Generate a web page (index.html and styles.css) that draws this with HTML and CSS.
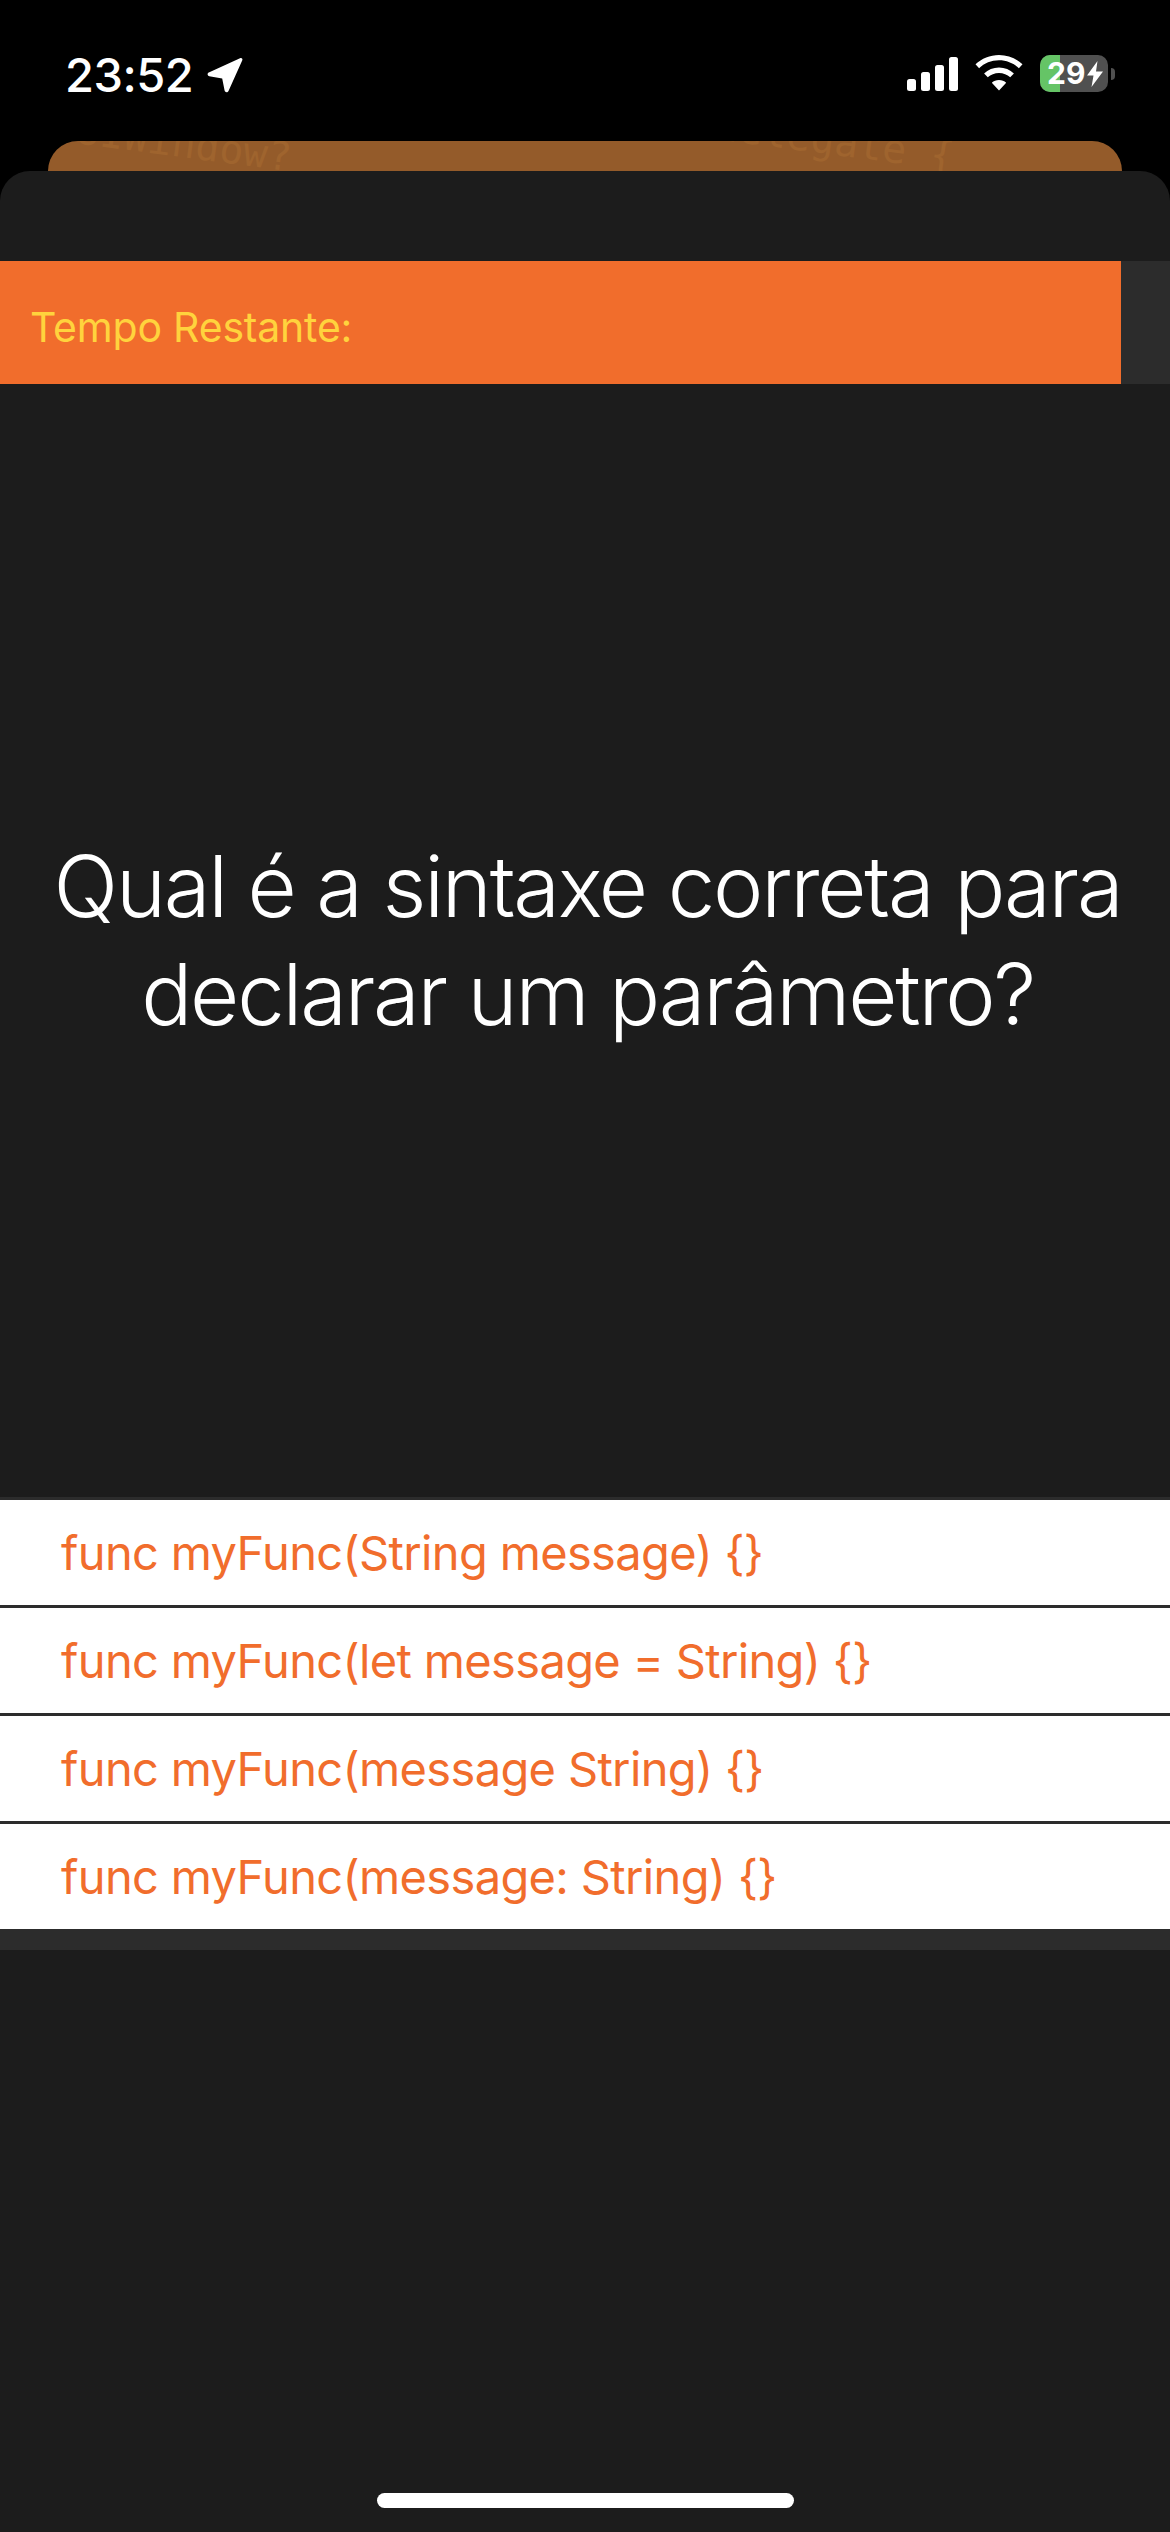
FILE: index.html
```html
<!DOCTYPE html>
<html lang="pt">
<head>
<meta charset="utf-8">
<title>Quiz</title>
<link rel="stylesheet" href="styles.css">
</head>
<body>
<div class="screen">
  <header class="status">
    <div class="status-left">
      <span class="time">23:52</span>
      <svg class="loc" viewBox="0 0 36 36" width="36" height="36"><path d="M33 1.200c1.500-.9 3 .5 2.300 2L21.500 34c-.9 1.800-3.400 1.500-3.900-.4L15.200 21.500 2.300 19.200c-2-.4-2.300-2.900-.5-3.700z" fill="#fff"/></svg>
    </div>
    <div class="status-right">
      <svg class="signal" viewBox="0 0 51 34" width="51" height="34"><rect x="0" y="22" width="9" height="12" rx="2.500"/><rect x="14" y="15" width="9" height="19" rx="2.500"/><rect x="28" y="8" width="9" height="26" rx="2.500"/><rect x="42" y="0" width="9" height="34" rx="2.500"/></svg>
      <svg class="wifi" viewBox="0 0 48 36" width="48" height="36"><path d="M24 0c9 0 17.300 3.500 23.500 9.300l-3.600 3.900C38.700 8.300 31.700 5.300 24 5.300S9.300 8.300 4.100 13.200L.5 9.300C6.700 3.500 15 0 24 0zM24 12.500c5.700 0 11 2.200 14.900 5.900l-3.700 3.900C32.300 19.600 28.300 18 24 18s-8.300 1.600-11.200 4.300l-3.700-3.900C13 14.700 18.300 12.500 24 12.500zM24 25c2.800 0 5.300 1 7.200 2.800L24 35.500l-7.200-7.700C18.700 26 21.200 25 24 25z"/></svg>
      <div class="battery">
        <div class="battery-body">
          <div class="battery-fill"></div>
          <span class="battery-text">29</span>
          <svg class="bolt" viewBox="0 0 16 26" width="16" height="26"><path d="M10.500 0 0 14.500h6.500L4.500 26 16 10.500H9z" fill="#fff"/></svg>
        </div>
        <div class="battery-cap"></div>
      </div>
    </div>
  </header>

  <div class="peek">
    <div class="peek-card">
      <span class="peek-code peek-a">UIWindow?</span>
      <span class="peek-code peek-b">delegate {</span>
    </div>
  </div>

  <main class="sheet">
    <div class="timer">
      <div class="timer-fill"><span class="timer-label">Tempo Restante:</span></div>
    </div>
    <div class="question">
      <h1 class="question-text">Qual é a sintaxe correta para declarar um parâmetro?</h1>
    </div>
    <ul class="answers">
      <li class="answer">func myFunc(String message) {}</li>
      <li class="answer">func myFunc(let message = String) {}</li>
      <li class="answer">func myFunc(message String) {}</li>
      <li class="answer">func myFunc(message: String) {}</li>
    </ul>
    <div class="home-area"><div class="home-bar"></div></div>
  </main>
</div>
</body>
</html>
```
FILE: styles.css
```css
* { box-sizing: border-box; }
html, body { margin: 0; padding: 0; background: #000; }
body { font-family: Inter, "Liberation Sans", sans-serif; }
.screen { width: 1170px; height: 2532px; display: flex; flex-direction: column; overflow: hidden; background: #000; }

.status { height: 141px; flex: none; display: flex; justify-content: space-between; padding: 55px 55px 0 65px; }
.status-left { display: flex; align-items: flex-start; gap: 14px; }
.time { color: #fff; font-size: 47px; font-weight: 500; letter-spacing: -0.5px; line-height: 40px; }
.loc { margin-top: 2px; }
.status-right { display: flex; align-items: flex-start; }
.signal { fill: #fff; margin-top: 2px; }
.wifi { fill: #fff; margin-left: 17px; }
.battery { display: flex; align-items: center; margin-left: 17px; height: 37px; }
.battery-body { position: relative; width: 68px; height: 37px; border-radius: 10px; background: #505050; overflow: hidden; display: flex; align-items: center; padding-left: 7px; gap: 2px; }
.battery-fill { position: absolute; left: 0; top: 0; bottom: 0; width: 20px; background: #65c466; }
.battery-text { position: relative; color: #fff; font-size: 30px; font-weight: 700; line-height: 37px; }
.bolt { position: relative; flex: none; }
.battery-cap { width: 4px; height: 12px; background: #505050; border-radius: 0 4px 4px 0; margin-left: 3px; }

.peek { height: 30px; flex: none; padding: 0 48px; }
.peek-card { position: relative; height: 30px; background: #945b2a; border-radius: 30px 30px 0 0; overflow: hidden; }
.peek-code { position: absolute; font-family: "DejaVu Sans Mono", monospace; font-size: 40px; line-height: 40px; color: #9f642e; transform-origin: 0 32px; transform: rotate(7.5deg); white-space: pre; }
.peek-a { left: 27px; top: -32px; }
.peek-b { left: 666px; top: -36px; }

.sheet { flex: 1; display: flex; flex-direction: column; background: #1c1c1c; border-radius: 30px 30px 0 0; padding-top: 90px; }
.timer { height: 123px; flex: none; background: #2c2c2c; }
.timer-fill { width: 1121px; height: 100%; background: #f16d2c; display: flex; align-items: center; padding: 8px 0 0 30px; }
.timer-label { color: #ffd33d; font-size: 41px; font-weight: 400; letter-spacing: -0.2px; }

.question { height: 1113px; flex: none; display: flex; align-items: center; justify-content: center; padding: 0 40px 0 45px; }
.question-text { margin: 0; color: #fff; font-size: 85px; letter-spacing: -2.2px; line-height: 107.5px; font-weight: 300; text-align: center; }

.answers { list-style: none; margin: 0; padding: 0 0 21px; background: #2c2c2c; display: flex; flex-direction: column; gap: 3px; border-top: 3px solid #2c2c2c; flex: none; }
.answer { height: 105px; background: #fff; color: #f16d2c; font-size: 47px; letter-spacing: -0.65px; font-weight: 400; display: flex; align-items: center; padding-left: 61px; }

.home-area { flex: 1; display: flex; align-items: flex-end; justify-content: center; padding-bottom: 24px; }
.home-bar { width: 417px; height: 15px; border-radius: 8px; background: #fff; }
```
